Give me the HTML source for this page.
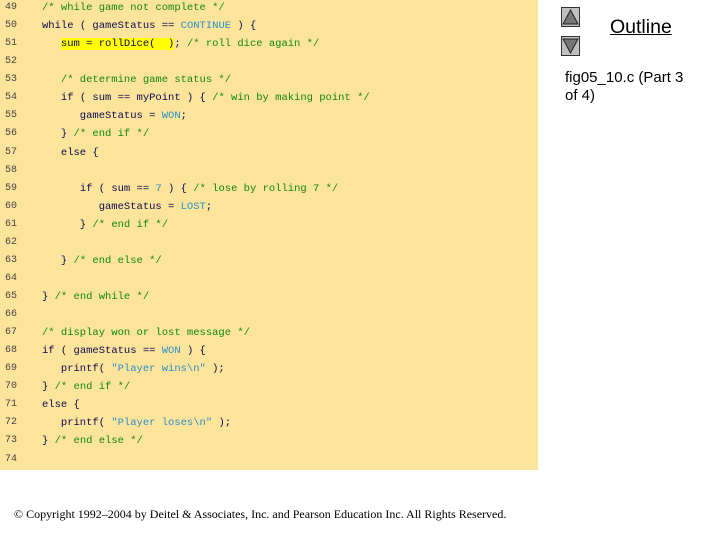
<!DOCTYPE html>
<html><head><meta charset="utf-8"><style>
body{margin:0;width:720px;height:540px;background:#fff;position:relative;overflow:hidden;font-family:"Liberation Sans",sans-serif}
#panel{position:absolute;left:0;top:0;width:538px;height:470px;background:#FDE49B}
#code{position:absolute;left:0;top:2px}
.l{position:absolute;left:0;height:16px;line-height:16px;font-family:"Liberation Mono",monospace;font-size:10.5px;color:#0a0a50;white-space:pre}
.n{position:absolute;left:5px;color:#444;font-size:10px}
.c{position:absolute;left:42px}
.g{color:#118811}
.k{color:#0a0a50}
.b{color:#2a8fc8}
.h{background:#ffff00}
.btn{position:absolute;left:561px;width:19px;height:20px;background:#c0c0c0;border:1px solid #333;box-sizing:border-box}
</style></head><body>
<div id="panel"></div>
<div id="code">
<div class="l" style="top:-2px"><span class="n">49</span><span class="c g">/* while game not complete */</span></div>
<div class="l" style="top:16px"><span class="n">50</span><span class="c"><span class="k">while</span> ( gameStatus == <span class="b">CONTINUE</span> ) {</span></div>
<div class="l" style="top:34px"><span class="n">51</span><span class="c">   <span class="h">sum = rollDice(  )</span>; <span class="g">/* roll dice again */</span></span></div>
<div class="l" style="top:52px"><span class="n">52</span></div>
<div class="l" style="top:70px"><span class="n">53</span><span class="c g">   /* determine game status */</span></div>
<div class="l" style="top:88px"><span class="n">54</span><span class="c">   <span class="k">if</span> ( sum == myPoint ) { <span class="g">/* win by making point */</span></span></div>
<div class="l" style="top:106px"><span class="n">55</span><span class="c">      gameStatus = <span class="b">WON</span>;</span></div>
<div class="l" style="top:124px"><span class="n">56</span><span class="c">   } <span class="g">/* end if */</span></span></div>
<div class="l" style="top:143px"><span class="n">57</span><span class="c">   <span class="k">else</span> {</span></div>
<div class="l" style="top:161px"><span class="n">58</span></div>
<div class="l" style="top:179px"><span class="n">59</span><span class="c">      <span class="k">if</span> ( sum == <span class="b">7</span> ) { <span class="g">/* lose by rolling 7 */</span></span></div>
<div class="l" style="top:197px"><span class="n">60</span><span class="c">         gameStatus = <span class="b">LOST</span>;</span></div>
<div class="l" style="top:215px"><span class="n">61</span><span class="c">      } <span class="g">/* end if */</span></span></div>
<div class="l" style="top:233px"><span class="n">62</span></div>
<div class="l" style="top:251px"><span class="n">63</span><span class="c">   } <span class="g">/* end else */</span></span></div>
<div class="l" style="top:269px"><span class="n">64</span></div>
<div class="l" style="top:287px"><span class="n">65</span><span class="c">} <span class="g">/* end while */</span></span></div>
<div class="l" style="top:305px"><span class="n">66</span></div>
<div class="l" style="top:323px"><span class="n">67</span><span class="c g">/* display won or lost message */</span></div>
<div class="l" style="top:341px"><span class="n">68</span><span class="c"><span class="k">if</span> ( gameStatus == <span class="b">WON</span> ) {</span></div>
<div class="l" style="top:359px"><span class="n">69</span><span class="c">   printf( <span class="b">"Player wins\n"</span> );</span></div>
<div class="l" style="top:377px"><span class="n">70</span><span class="c">} <span class="g">/* end if */</span></span></div>
<div class="l" style="top:395px"><span class="n">71</span><span class="c"><span class="k">else</span> {</span></div>
<div class="l" style="top:413px"><span class="n">72</span><span class="c">   printf( <span class="b">"Player loses\n"</span> );</span></div>
<div class="l" style="top:431px"><span class="n">73</span><span class="c">} <span class="g">/* end else */</span></span></div>
<div class="l" style="top:450px"><span class="n">74</span></div>
</div>

<div class="btn" style="top:7px"><svg width="17" height="18" style="position:absolute;left:0;top:0"><polygon points="8.5,2 16,16 1,16" fill="#777" stroke="#222" stroke-width="1"/></svg></div>
<div class="btn" style="top:36px"><svg width="17" height="18" style="position:absolute;left:0;top:0"><polygon points="1,2 16,2 8.5,16" fill="#777" stroke="#222" stroke-width="1"/></svg></div>
<div style="position:absolute;left:610px;top:16px;font-size:19.5px;text-decoration:underline;color:#000">Outline</div>
<div style="position:absolute;left:565px;top:69px;font-size:15px;line-height:18px;color:#000;width:150px">fig05_10.c (Part 3<br>of 4)</div>
<div style="position:absolute;left:14px;top:507px;font-family:'Liberation Serif',serif;font-size:12px;color:#000;white-space:nowrap">© Copyright 1992–2004 by Deitel &amp; Associates, Inc. and Pearson Education Inc. All Rights Reserved.</div>
</body></html>
